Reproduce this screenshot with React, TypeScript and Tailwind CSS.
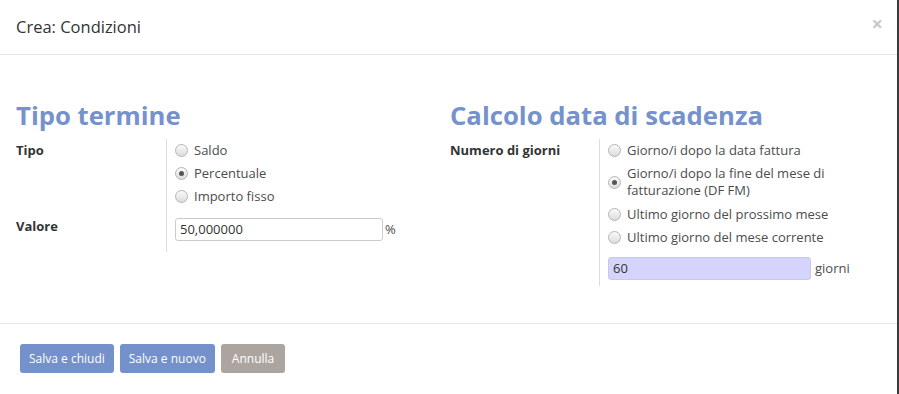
import React from 'react';

const font = { fontFamily: '"Open Sans", "DejaVu Sans", sans-serif' };

const Radio: React.FC<{ checked?: boolean }> = ({ checked }) => (
  <span className="relative inline-block w-[13px] h-[13px] shrink-0 rounded-full border border-[#b5b5b5] bg-gradient-to-b from-[#fafafa] to-[#dcdcdc]">
    {checked && (
      <span className="absolute left-[3px] top-[3px] w-[5px] h-[5px] rounded-full bg-[#555]" />
    )}
  </span>
);

const Option: React.FC<{ label: React.ReactNode; checked?: boolean; className?: string }> = ({
  label,
  checked,
  className = 'h-[23px]'
}) => (
  <div className={`flex items-center gap-[6px] ${className}`}>
    <Radio checked={checked} />
    <span>{label}</span>
  </div>
);

export default function App() {
  return (
    <div className="w-[899px] h-[394px] bg-white text-[13px] text-[#4c4c4c] overflow-hidden" style={font}>
      <div className="flex h-full">
        <div className="flex-1 flex flex-col border-r-2 border-[#3a3a3a]">
          {/* Header */}
          <div className="relative h-[55px] px-4 flex items-center border-b border-[#e5e5e5]">
            <h4 className="text-[16.5px] text-[#333]">Crea: Condizioni</h4>
            <span className="absolute right-[14px] top-[9px] text-[20px] font-bold text-[#c8c8c8]">×</span>
          </div>

          {/* Body */}
          <div className="flex pl-4 pt-[46px] h-[269px] border-b border-[#e5e5e5]">
            <div className="w-[434px]">
              <h2 className="text-[25.7px] leading-[30px] font-bold text-[#7592cd] mb-[8px]">Tipo termine</h2>
              <div className="flex">
                <div className="w-[150px] pt-[1px] leading-[20px] font-bold text-[#333]">Tipo</div>
                <div className="border-l border-[#ddd] pl-2">
                  <Option label="Saldo" />
                  <Option label="Percentuale" checked />
                  <Option label="Importo fisso" />
                </div>
              </div>
              <div className="flex">
                <div className="w-[150px] pt-[8px] leading-[20px] font-bold text-[#333]">Valore</div>
                <div className="border-l border-[#ddd] pl-2 pt-[10px] pb-[11px] flex items-center gap-[2px]">
                  <div className="w-[208px] h-[23px] border border-[#ccc] rounded-[3px] px-[4px] flex items-center text-[#333]">
                    50,000000
                  </div>
                  <span>%</span>
                </div>
              </div>
            </div>

            <div className="flex-1">
              <h2 className="text-[25.7px] leading-[30px] font-bold text-[#7592cd] mb-[8px]">Calcolo data di scadenza</h2>
              <div className="flex">
                <div className="w-[149px] pt-[1px] leading-[20px] font-bold text-[#333]">Numero di giorni</div>
                <div className="border-l border-[#ddd] pl-2 pb-[6px]">
                  <Option label="Giorno/i dopo la data fattura" />
                  <Option
                    className="pt-[3px] pb-[4px] leading-[17px]"
                    label={
                      <>
                        Giorno/i dopo la fine del mese di
                        <br />
                        fatturazione (DF FM)
                      </>
                    }
                    checked
                  />
                  <Option label="Ultimo giorno del prossimo mese" />
                  <Option label="Ultimo giorno del mese corrente" />
                  <div className="flex items-center gap-[4px] mt-[8px]">
                    <div className="w-[203px] h-[23px] rounded-[3px] border border-[#c8c8ee] bg-[#d4d4fc] px-[4px] flex items-center text-[#333]">
                      60
                    </div>
                    <span>giorni</span>
                  </div>
                </div>
              </div>
            </div>
          </div>

          {/* Footer */}
          <div className="flex gap-[6px] px-5 pt-5">
            <button className="h-[29px] px-[9px] rounded-[3px] bg-[#7491cc] text-white text-[12px]">Salva e chiudi</button>
            <button className="h-[29px] px-[9px] rounded-[3px] bg-[#7491cc] text-white text-[12px]">Salva e nuovo</button>
            <button className="h-[29px] px-[11px] rounded-[3px] bg-[#aca59f] text-white text-[12px]">Annulla</button>
          </div>
        </div>
      </div>
    </div>
  );
}
